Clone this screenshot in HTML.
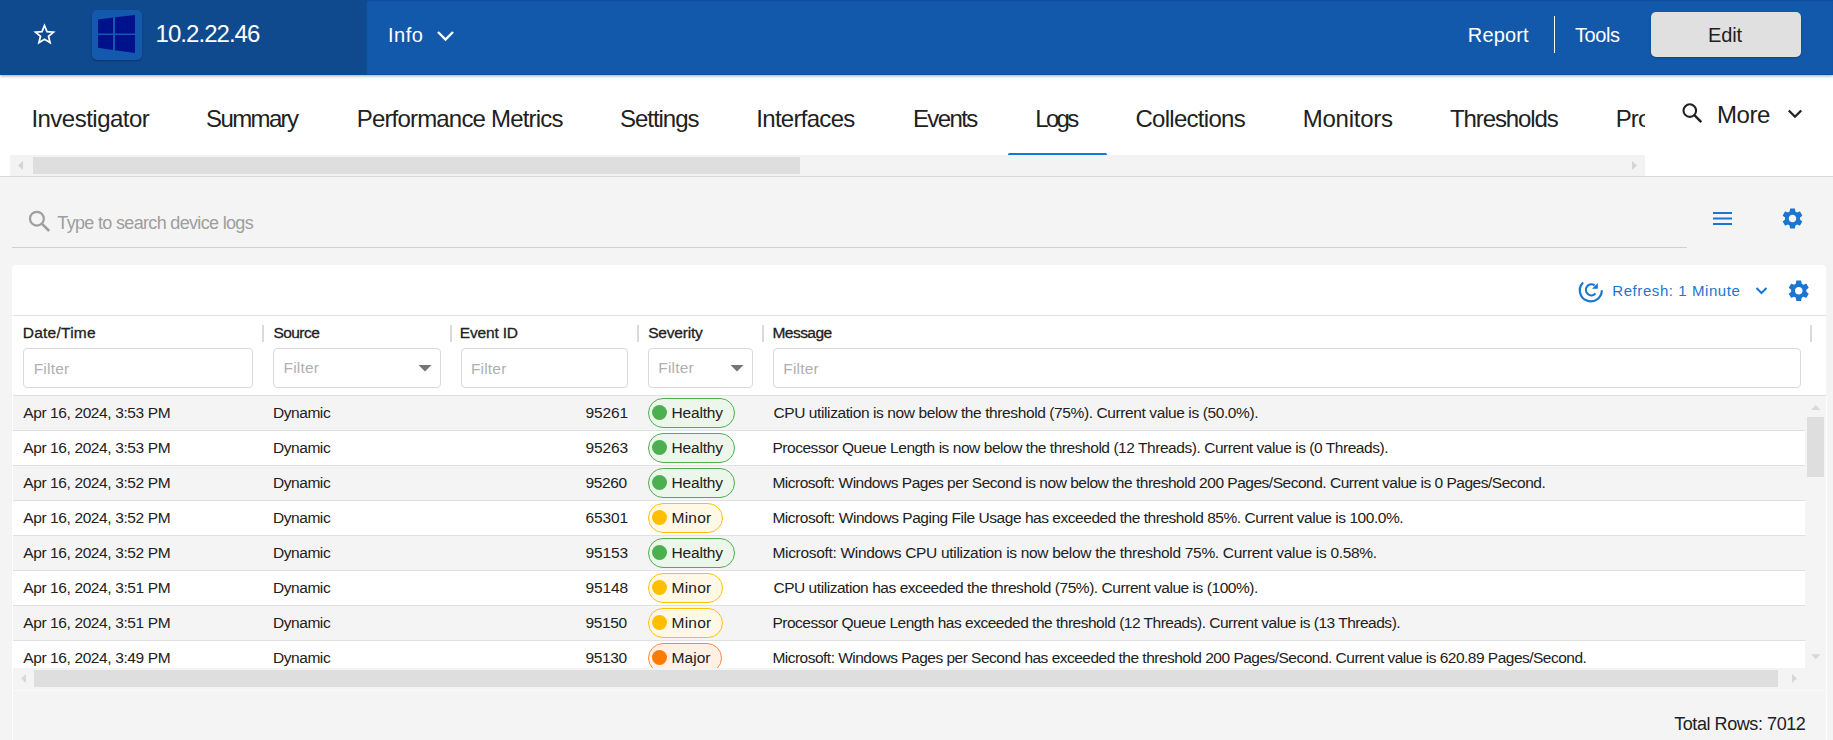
<!DOCTYPE html>
<html><head><meta charset="utf-8">
<style>
html,body{margin:0;padding:0;}
body{width:1833px;height:740px;overflow:hidden;background:#f4f4f4;position:relative;font-family:"Liberation Sans",sans-serif;}
.a{position:absolute;}
.t{position:absolute;z-index:5;white-space:nowrap;line-height:normal;font-family:"Liberation Sans",sans-serif;}
svg{position:absolute;overflow:visible;}
</style></head><body>
<!-- header -->
<div class="a" style="left:0;top:0;width:1833px;height:75px;background:#1259ab;box-shadow:0 1px 3px rgba(0,0,0,.35), inset 0 1px 1px rgba(0,0,0,.12);z-index:2"></div>
<div class="a" style="left:0;top:0;width:366px;height:75px;background:#104a8e;box-shadow:1px 0 1px rgba(0,0,0,.12);z-index:2"></div>
<div class="a" style="left:0;top:74px;width:1833px;height:1px;background:#0d47a1;opacity:.6;z-index:2"></div>
<svg style="left:0;top:0;z-index:3" width="1833" height="75">
  <polygon points="44.5,25.5 47.0,31.6 53.5,32.1 48.5,36.3 50.1,42.7 44.5,39.2 38.9,42.7 40.5,36.3 35.5,32.1 42.0,31.6" fill="none" stroke="#fff" stroke-width="1.7" stroke-linejoin="miter"/>
</svg>
<div class="a" style="left:92px;top:10px;width:50px;height:50px;border-radius:5px;background:#1359ad;box-shadow:0 1px 2px rgba(0,0,0,.3);z-index:3"></div>
<svg style="left:0;top:0;z-index:4" width="400" height="75">
  <polygon points="98,19.6 113,17.6 113,33.6 98,33.6" fill="#00118c"/>
  <polygon points="115,17.3 135,14.9 135,33.6 115,33.6" fill="#00118c"/>
  <polygon points="98,35.1 113,35.1 113,50 98,47.8" fill="#00118c"/>
  <polygon points="115,35.1 135,35.1 135,52.9 115,50.3" fill="#00118c"/>
  <polyline points="438,32 445.5,39.5 453,32" fill="none" stroke="#fff" stroke-width="2.4"/>
</svg>
<div class="a" style="left:1554px;top:16px;width:1px;height:37px;background:#fff;z-index:3"></div>
<div class="a" style="left:1651px;top:12px;width:150px;height:45px;border-radius:5px;background:#e0e0e0;box-shadow:0 1px 2px rgba(0,0,0,.25);z-index:3"></div>

<!-- tab bar -->
<div class="a" style="left:0;top:75px;width:1833px;height:101px;background:#fff;"></div>
<div class="a" style="left:0;top:176px;width:1833px;height:1px;background:#d9d9d9;"></div>
<div class="a" style="left:1008px;top:153px;width:99px;height:3px;border-radius:2px;background:#1976d2;"></div>
<div class="a" style="left:10px;top:155px;width:1635px;height:21px;background:#f3f3f3;"></div>
<div class="a" style="left:33px;top:157px;width:767px;height:17px;background:#dedede;"></div>
<svg style="left:0;top:0" width="1833" height="180">
  <polygon points="23,161 23,170 18,165.5" fill="#d4d4d4"/>
  <polygon points="1632,161 1632,170 1637,165.5" fill="#d4d4d4"/>
  <circle cx="1689.8" cy="110.6" r="6.3" fill="none" stroke="#212121" stroke-width="2.1"/>
  <line x1="1694.6" y1="115.4" x2="1701.3" y2="122.1" stroke="#212121" stroke-width="2.4"/>
  <polyline points="1788.8,110.5 1795,116.7 1801.2,110.5" fill="none" stroke="#212121" stroke-width="2.3"/>
</svg>
<div class="a" style="left:1610px;top:95px;width:35px;height:45px;overflow:hidden;z-index:1"><div class="t" style="left:5.7px;top:10.28px;font-size:24px;color:#212121;letter-spacing:-0.9px">Processes</div></div>

<!-- search -->
<svg style="left:0;top:0" width="1833" height="260">
  <circle cx="36.9" cy="218.7" r="6.9" fill="none" stroke="#9e9e9e" stroke-width="2.2"/>
  <line x1="42" y1="223.8" x2="49.2" y2="231" stroke="#9e9e9e" stroke-width="2.6"/>
  <rect x="1713" y="212" width="19" height="2" fill="#1976d2"/>
  <rect x="1713" y="217.5" width="19" height="2" fill="#1976d2"/>
  <rect x="1713" y="223" width="19" height="2" fill="#1976d2"/>
</svg>
<svg style="left:1780px;top:205.9px" width="25" height="25" viewBox="0 0 24 24"><path fill="#1976d2" d="M19.14 12.94c.04-.3.06-.61.06-.94 0-.32-.02-.64-.07-.94l2.03-1.58c.18-.14.23-.41.12-.61l-1.92-3.32c-.12-.22-.37-.29-.59-.22l-2.39.96c-.5-.38-1.03-.7-1.62-.94l-.36-2.54c-.04-.24-.24-.41-.48-.41h-3.84c-.24 0-.43.17-.47.41l-.36 2.54c-.59.24-1.13.57-1.62.94l-2.39-.96c-.22-.08-.47 0-.59.22L2.74 8.87c-.12.21-.08.47.12.61l2.03 1.58c-.05.3-.09.63-.09.94s.02.64.07.94l-2.03 1.58c-.18.14-.23.41-.12.61l1.92 3.32c.12.22.37.29.59.22l2.39-.96c.5.38 1.03.7 1.62.94l.36 2.54c.05.24.24.41.48.41h3.84c.24 0 .44-.17.47-.41l.36-2.54c.59-.24 1.13-.56 1.62-.94l2.39.96c.22.08.47 0 .59-.22l1.92-3.32c.12-.22.07-.47-.12-.61l-2.01-1.58zM12 15.6c-1.98 0-3.6-1.62-3.6-3.6s1.62-3.6 3.6-3.6 3.6 1.62 3.6 3.6-1.62 3.6-3.6 3.6z"/></svg>
<div class="a" style="left:12px;top:247px;width:1675px;height:1px;background:#d0d0d0;"></div>

<!-- panel -->
<div class="a" style="left:12px;top:265px;width:1814px;height:480px;border-radius:4px;background:#fff;"></div>
<svg style="left:0;top:0" width="1833" height="320">
  <path d="M1582.5,283.2 A11,11 0 1 0 1601.8,291" fill="none" stroke="#1976d2" stroke-width="2.2" stroke-linecap="round"/>
  <path d="M1595.5,293.5 A5.5,5.5 0 1 1 1594.6,285.3" fill="none" stroke="#1976d2" stroke-width="2.2"/>
  <polygon points="1592,288.8 1597.8,288.8 1597.8,283" fill="#1976d2"/>
  <polyline points="1756.5,288 1761.5,293 1766.5,288" fill="none" stroke="#1976d2" stroke-width="2"/>
</svg>
<svg style="left:1785.75px;top:277.5px" width="25.5" height="25.5" viewBox="0 0 24 24"><path fill="#1976d2" d="M19.14 12.94c.04-.3.06-.61.06-.94 0-.32-.02-.64-.07-.94l2.030-1.58c.18-.14.23-.41.12-.61l-1.92-3.32c-.12-.22-.37-.29-.59-.22l-2.39.96c-.5-.38-1.03-.7-1.62-.94l-.36-2.54c-.04-.24-.24-.41-.48-.41h-3.84c-.24 0-.43.17-.47.41l-.36 2.54c-.59.24-1.13.57-1.62.94l-2.39-.96c-.22-.08-.47 0-.59.22L2.74 8.87c-.12.21-.08.47.12.61l2.03 1.58c-.05.3-.09.63-.09.94s.02.64.07.94l-2.03 1.58c-.18.14-.23.41-.12.61l1.92 3.32c.12.22.37.29.59.22l2.39-.96c.5.38 1.03.7 1.62.94l.36 2.54c.05.24.24.41.48.41h3.840c.24 0 .44-.17.47-.41l.36-2.54c.59-.24 1.13-.56 1.62-.94l2.39.96c.22.08.47 0 .59-.22l1.92-3.32c.12-.22.07-.47-.12-.61l-2.010-1.58zM12 15.6c-1.98 0-3.6-1.62-3.6-3.6s1.62-3.6 3.6-3.6 3.6 1.62 3.6 3.6-1.62 3.6-3.6 3.6z"/></svg>
<div class="a" style="left:13px;top:315px;width:1813px;height:1px;background:#e0e0e0;"></div>
<!-- header separators -->
<div class="a" style="left:262px;top:325px;width:2px;height:17px;background:#dadada;"></div>
<div class="a" style="left:450px;top:325px;width:2px;height:17px;background:#dadada;"></div>
<div class="a" style="left:637px;top:325px;width:2px;height:17px;background:#dadada;"></div>
<div class="a" style="left:762px;top:325px;width:2px;height:17px;background:#dadada;"></div>
<div class="a" style="left:1810px;top:325px;width:2px;height:17px;background:#dadada;"></div>
<!-- filters -->
<div class="a" style="left:23px;top:348px;width:228px;height:38px;border:1px solid #d9d9d9;border-radius:4px;"></div>
<div class="a" style="left:273px;top:348px;width:166px;height:38px;border:1px solid #d9d9d9;border-radius:4px;"></div>
<div class="a" style="left:461px;top:348px;width:165px;height:38px;border:1px solid #d9d9d9;border-radius:4px;"></div>
<div class="a" style="left:648px;top:348px;width:103px;height:38px;border:1px solid #d9d9d9;border-radius:4px;"></div>
<div class="a" style="left:773px;top:348px;width:1026px;height:38px;border:1px solid #d9d9d9;border-radius:4px;"></div>
<svg style="left:0;top:0" width="1833" height="400">
  <polygon points="418.5,365 431.5,365 425,371.5" fill="#757575"/>
  <polygon points="730.5,365 743.5,365 737,371.5" fill="#757575"/>
</svg>
<div class="a" style="left:13px;top:395px;width:1813px;height:1px;background:#e0e0e0;"></div>
<!-- rows -->
<div class="a" style="left:13px;top:396px;width:1792px;height:34px;background:#f4f4f4;border-bottom:1px solid #e0e0e0"></div>
<div class="a" style="left:648px;top:398px;width:85px;height:28px;border:1px solid #4caf50;border-radius:15px;background:#edf6eb"></div>
<div class="a" style="left:652px;top:405px;width:15px;height:15px;border-radius:50%;background:#4caf50"></div>
<div class="a" style="left:13px;top:431px;width:1792px;height:34px;background:#fff;border-bottom:1px solid #e0e0e0"></div>
<div class="a" style="left:648px;top:433px;width:85px;height:28px;border:1px solid #4caf50;border-radius:15px;background:#edf6eb"></div>
<div class="a" style="left:652px;top:440px;width:15px;height:15px;border-radius:50%;background:#4caf50"></div>
<div class="a" style="left:13px;top:466px;width:1792px;height:34px;background:#f4f4f4;border-bottom:1px solid #e0e0e0"></div>
<div class="a" style="left:648px;top:468px;width:85px;height:28px;border:1px solid #4caf50;border-radius:15px;background:#edf6eb"></div>
<div class="a" style="left:652px;top:475px;width:15px;height:15px;border-radius:50%;background:#4caf50"></div>
<div class="a" style="left:13px;top:501px;width:1792px;height:34px;background:#fff;border-bottom:1px solid #e0e0e0"></div>
<div class="a" style="left:648px;top:503px;width:73px;height:28px;border:1px solid #ffc107;border-radius:15px;background:#fff8e6"></div>
<div class="a" style="left:652px;top:510px;width:15px;height:15px;border-radius:50%;background:#ffbf00"></div>
<div class="a" style="left:13px;top:536px;width:1792px;height:34px;background:#f4f4f4;border-bottom:1px solid #e0e0e0"></div>
<div class="a" style="left:648px;top:538px;width:85px;height:28px;border:1px solid #4caf50;border-radius:15px;background:#edf6eb"></div>
<div class="a" style="left:652px;top:545px;width:15px;height:15px;border-radius:50%;background:#4caf50"></div>
<div class="a" style="left:13px;top:571px;width:1792px;height:34px;background:#fff;border-bottom:1px solid #e0e0e0"></div>
<div class="a" style="left:648px;top:573px;width:73px;height:28px;border:1px solid #ffc107;border-radius:15px;background:#fff8e6"></div>
<div class="a" style="left:652px;top:580px;width:15px;height:15px;border-radius:50%;background:#ffbf00"></div>
<div class="a" style="left:13px;top:606px;width:1792px;height:34px;background:#f4f4f4;border-bottom:1px solid #e0e0e0"></div>
<div class="a" style="left:648px;top:608px;width:73px;height:28px;border:1px solid #ffc107;border-radius:15px;background:#fff8e6"></div>
<div class="a" style="left:652px;top:615px;width:15px;height:15px;border-radius:50%;background:#ffbf00"></div>
<div class="a" style="left:13px;top:641px;width:1792px;height:34px;background:#fff;border-bottom:1px solid #e0e0e0"></div>
<div class="a" style="left:648px;top:643px;width:72px;height:28px;border:1px solid #ff8a3d;border-radius:15px;background:#fff0e5"></div>
<div class="a" style="left:652px;top:650px;width:15px;height:15px;border-radius:50%;background:#ff7a00"></div>
<!-- v scrollbar -->
<div class="a" style="left:1805px;top:396px;width:21px;height:294px;background:#f4f4f4;"></div>
<div class="a" style="left:1807px;top:417px;width:17px;height:60px;background:#dedede;"></div>
<svg style="left:0;top:0" width="1833" height="740">
  <polygon points="1811,410 1820.5,410 1815.75,405" fill="#d8d8d8"/>
  <polygon points="1811,654.2 1820.5,654.2 1815.75,659.2" fill="#d8d8d8"/>
</svg>
<!-- h scrollbar -->
<div class="a" style="left:13px;top:668px;width:1792px;height:22px;background:#f4f4f4;"></div>
<div class="a" style="left:34px;top:670px;width:1744px;height:17px;background:#dedede;"></div>
<svg style="left:0;top:0" width="1833" height="740">
  <polygon points="26,674 26,683 21,678.5" fill="#d8d8d8"/>
  <polygon points="1792,674 1792,683 1797,678.5" fill="#d8d8d8"/>
</svg>
<!-- footer -->
<div class="a" style="left:13px;top:690px;width:1813px;height:60px;background:#f4f4f4;border-top:1px solid #fafafa;"></div>
<div class="a" style="left:1826px;top:396px;width:1px;height:344px;background:#fcfcfc;"></div>
<div class="t" style="left:155.60px;top:20.28px;font-size:24px;font-weight:400;color:#fff;letter-spacing:-0.966px">10.2.22.46</div>
<div class="t" style="left:388.00px;top:23.90px;font-size:20px;font-weight:400;color:#fff;letter-spacing:0.488px">Info</div>
<div class="t" style="left:1467.80px;top:24.30px;font-size:20px;font-weight:400;color:#fff;letter-spacing:0.145px">Report</div>
<div class="t" style="left:1575.00px;top:24.30px;font-size:20px;font-weight:400;color:#fff;letter-spacing:-0.422px">Tools</div>
<div class="t" style="left:1708.00px;top:24.30px;font-size:20px;font-weight:400;color:#212121;letter-spacing:-0.135px">Edit</div>
<div class="t" style="left:31.40px;top:105.28px;font-size:24px;font-weight:400;color:#212121;letter-spacing:-0.516px">Investigator</div>
<div class="t" style="left:206.00px;top:105.28px;font-size:24px;font-weight:400;color:#212121;letter-spacing:-1.613px">Summary</div>
<div class="t" style="left:356.70px;top:105.28px;font-size:24px;font-weight:400;color:#212121;letter-spacing:-0.816px">Performance Metrics</div>
<div class="t" style="left:620.00px;top:105.28px;font-size:24px;font-weight:400;color:#212121;letter-spacing:-1.031px">Settings</div>
<div class="t" style="left:756.30px;top:105.28px;font-size:24px;font-weight:400;color:#212121;letter-spacing:-0.710px">Interfaces</div>
<div class="t" style="left:912.90px;top:105.28px;font-size:24px;font-weight:400;color:#212121;letter-spacing:-1.614px">Events</div>
<div class="t" style="left:1035.30px;top:105.28px;font-size:24px;font-weight:400;color:#212121;letter-spacing:-2.714px">Logs</div>
<div class="t" style="left:1135.40px;top:105.28px;font-size:24px;font-weight:400;color:#212121;letter-spacing:-0.709px">Collections</div>
<div class="t" style="left:1302.80px;top:105.28px;font-size:24px;font-weight:400;color:#212121;letter-spacing:-0.261px">Monitors</div>
<div class="t" style="left:1450.00px;top:105.28px;font-size:24px;font-weight:400;color:#212121;letter-spacing:-1.103px">Thresholds</div>
<div class="t" style="left:1717.00px;top:101.28px;font-size:24px;font-weight:400;color:#212121;letter-spacing:-0.444px">More</div>
<div class="t" style="left:57.30px;top:212.51px;font-size:18px;font-weight:400;color:#9e9e9e;letter-spacing:-0.669px">Type to search device logs</div>
<div class="t" style="left:1612.30px;top:282.12px;font-size:15.01px;font-weight:400;color:#1976d2;letter-spacing:0.572px">Refresh: 1 Minute</div>
<div class="t" style="left:22.70px;top:324.17px;font-size:15.5px;font-weight:400;color:#212121;letter-spacing:0.251px;-webkit-text-stroke:0.3px #212121">Date/Time</div>
<div class="t" style="left:273.40px;top:324.17px;font-size:15.5px;font-weight:400;color:#212121;letter-spacing:-0.538px;-webkit-text-stroke:0.3px #212121">Source</div>
<div class="t" style="left:459.80px;top:324.17px;font-size:15.5px;font-weight:400;color:#212121;letter-spacing:-0.178px;-webkit-text-stroke:0.3px #212121">Event ID</div>
<div class="t" style="left:648.20px;top:324.17px;font-size:15.5px;font-weight:400;color:#212121;letter-spacing:-0.206px;-webkit-text-stroke:0.3px #212121">Severity</div>
<div class="t" style="left:772.50px;top:324.17px;font-size:15.5px;font-weight:400;color:#212121;letter-spacing:-0.545px;-webkit-text-stroke:0.3px #212121">Message</div>
<div class="t" style="left:33.70px;top:360.17px;font-size:15.5px;font-weight:400;color:#b0b0b0;letter-spacing:0.204px">Filter</div>
<div class="t" style="left:283.50px;top:358.57px;font-size:15.5px;font-weight:400;color:#b0b0b0;letter-spacing:0.204px">Filter</div>
<div class="t" style="left:470.90px;top:360.17px;font-size:15.5px;font-weight:400;color:#b0b0b0;letter-spacing:0.204px">Filter</div>
<div class="t" style="left:658.30px;top:358.57px;font-size:15.5px;font-weight:400;color:#b0b0b0;letter-spacing:0.204px">Filter</div>
<div class="t" style="left:783.30px;top:360.17px;font-size:15.5px;font-weight:400;color:#b0b0b0;letter-spacing:0.204px">Filter</div>
<div class="t" style="left:23.20px;top:403.87px;font-size:15.5px;font-weight:400;color:#212121;letter-spacing:-0.384px">Apr 16, 2024, 3:53 PM</div>
<div class="t" style="left:272.90px;top:403.87px;font-size:15.5px;font-weight:400;color:#212121;letter-spacing:-0.423px">Dynamic</div>
<div class="t" style="left:585.40px;top:403.87px;font-size:15.5px;font-weight:400;color:#212121;letter-spacing:-0.095px">95261</div>
<div class="t" style="left:671.50px;top:403.87px;font-size:15.5px;font-weight:400;color:#212121;letter-spacing:-0.184px">Healthy</div>
<div class="t" style="left:773.40px;top:403.87px;font-size:15.5px;font-weight:400;color:#212121;letter-spacing:-0.395px">CPU utilization is now below the threshold (75%). Current value is (50.0%).</div>
<div class="t" style="left:23.20px;top:438.87px;font-size:15.5px;font-weight:400;color:#212121;letter-spacing:-0.384px">Apr 16, 2024, 3:53 PM</div>
<div class="t" style="left:272.90px;top:438.87px;font-size:15.5px;font-weight:400;color:#212121;letter-spacing:-0.423px">Dynamic</div>
<div class="t" style="left:585.40px;top:438.87px;font-size:15.5px;font-weight:400;color:#212121;letter-spacing:-0.095px">95263</div>
<div class="t" style="left:671.50px;top:438.87px;font-size:15.5px;font-weight:400;color:#212121;letter-spacing:-0.184px">Healthy</div>
<div class="t" style="left:772.40px;top:438.87px;font-size:15.5px;font-weight:400;color:#212121;letter-spacing:-0.452px">Processor Queue Length is now below the threshold (12 Threads). Current value is (0 Threads).</div>
<div class="t" style="left:23.20px;top:473.87px;font-size:15.5px;font-weight:400;color:#212121;letter-spacing:-0.384px">Apr 16, 2024, 3:52 PM</div>
<div class="t" style="left:272.90px;top:473.87px;font-size:15.5px;font-weight:400;color:#212121;letter-spacing:-0.423px">Dynamic</div>
<div class="t" style="left:585.40px;top:473.87px;font-size:15.5px;font-weight:400;color:#212121;letter-spacing:-0.345px">95260</div>
<div class="t" style="left:671.50px;top:473.87px;font-size:15.5px;font-weight:400;color:#212121;letter-spacing:-0.184px">Healthy</div>
<div class="t" style="left:772.40px;top:473.87px;font-size:15.5px;font-weight:400;color:#212121;letter-spacing:-0.488px">Microsoft: Windows Pages per Second is now below the threshold 200 Pages/Second. Current value is 0 Pages/Second.</div>
<div class="t" style="left:23.20px;top:508.87px;font-size:15.5px;font-weight:400;color:#212121;letter-spacing:-0.384px">Apr 16, 2024, 3:52 PM</div>
<div class="t" style="left:272.90px;top:508.87px;font-size:15.5px;font-weight:400;color:#212121;letter-spacing:-0.423px">Dynamic</div>
<div class="t" style="left:585.40px;top:508.87px;font-size:15.5px;font-weight:400;color:#212121;letter-spacing:-0.095px">65301</div>
<div class="t" style="left:671.50px;top:508.87px;font-size:15.5px;font-weight:400;color:#212121;letter-spacing:0.226px">Minor</div>
<div class="t" style="left:772.40px;top:508.87px;font-size:15.5px;font-weight:400;color:#212121;letter-spacing:-0.463px">Microsoft: Windows Paging File Usage has exceeded the threshold 85%. Current value is 100.0%.</div>
<div class="t" style="left:23.20px;top:543.87px;font-size:15.5px;font-weight:400;color:#212121;letter-spacing:-0.384px">Apr 16, 2024, 3:52 PM</div>
<div class="t" style="left:272.90px;top:543.87px;font-size:15.5px;font-weight:400;color:#212121;letter-spacing:-0.423px">Dynamic</div>
<div class="t" style="left:585.40px;top:543.87px;font-size:15.5px;font-weight:400;color:#212121;letter-spacing:-0.095px">95153</div>
<div class="t" style="left:671.50px;top:543.87px;font-size:15.5px;font-weight:400;color:#212121;letter-spacing:-0.184px">Healthy</div>
<div class="t" style="left:772.40px;top:543.87px;font-size:15.5px;font-weight:400;color:#212121;letter-spacing:-0.310px">Microsoft: Windows CPU utilization is now below the threshold 75%. Current value is 0.58%.</div>
<div class="t" style="left:23.20px;top:578.87px;font-size:15.5px;font-weight:400;color:#212121;letter-spacing:-0.384px">Apr 16, 2024, 3:51 PM</div>
<div class="t" style="left:272.90px;top:578.87px;font-size:15.5px;font-weight:400;color:#212121;letter-spacing:-0.423px">Dynamic</div>
<div class="t" style="left:585.40px;top:578.87px;font-size:15.5px;font-weight:400;color:#212121;letter-spacing:-0.095px">95148</div>
<div class="t" style="left:671.50px;top:578.87px;font-size:15.5px;font-weight:400;color:#212121;letter-spacing:0.226px">Minor</div>
<div class="t" style="left:773.40px;top:578.87px;font-size:15.5px;font-weight:400;color:#212121;letter-spacing:-0.450px">CPU utilization has exceeded the threshold (75%). Current value is (100%).</div>
<div class="t" style="left:23.20px;top:613.87px;font-size:15.5px;font-weight:400;color:#212121;letter-spacing:-0.384px">Apr 16, 2024, 3:51 PM</div>
<div class="t" style="left:272.90px;top:613.87px;font-size:15.5px;font-weight:400;color:#212121;letter-spacing:-0.423px">Dynamic</div>
<div class="t" style="left:585.40px;top:613.87px;font-size:15.5px;font-weight:400;color:#212121;letter-spacing:-0.345px">95150</div>
<div class="t" style="left:671.50px;top:613.87px;font-size:15.5px;font-weight:400;color:#212121;letter-spacing:0.226px">Minor</div>
<div class="t" style="left:772.40px;top:613.87px;font-size:15.5px;font-weight:400;color:#212121;letter-spacing:-0.493px">Processor Queue Length has exceeded the threshold (12 Threads). Current value is (13 Threads).</div>
<div class="t" style="left:23.20px;top:648.87px;font-size:15.5px;font-weight:400;color:#212121;letter-spacing:-0.384px">Apr 16, 2024, 3:49 PM</div>
<div class="t" style="left:272.90px;top:648.87px;font-size:15.5px;font-weight:400;color:#212121;letter-spacing:-0.423px">Dynamic</div>
<div class="t" style="left:585.40px;top:648.87px;font-size:15.5px;font-weight:400;color:#212121;letter-spacing:-0.345px">95130</div>
<div class="t" style="left:671.50px;top:648.87px;font-size:15.5px;font-weight:400;color:#212121;letter-spacing:0.051px">Major</div>
<div class="t" style="left:772.40px;top:648.87px;font-size:15.5px;font-weight:400;color:#212121;letter-spacing:-0.514px">Microsoft: Windows Pages per Second has exceeded the threshold 200 Pages/Second. Current value is 620.89 Pages/Second.</div>
<div class="t" style="left:1674.20px;top:713.71px;font-size:18px;font-weight:400;color:#212121;letter-spacing:-0.431px">Total Rows: 7012</div>
</body></html>
